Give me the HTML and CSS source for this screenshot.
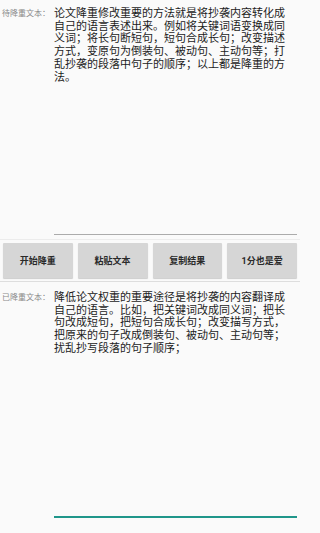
FILE: index.html
```html
<!DOCTYPE html>
<html lang="zh-CN">
<head>
<meta charset="utf-8">
<title>降重</title>
<link rel="stylesheet" href="styles.css">
</head>
<body>
<div class="field field-top">
  <div class="label">待降重文本：</div>
  <div class="box box-input">论文降重修改重要的方法就是将抄袭内容转化成自己的语言表述出来。例如将关键词语变换成同义词；将长句断短句，短句合成长句；改变描述方式，变原句为倒装句、被动句、主动句等；打乱抄袭的段落中句子的顺序；以上都是降重的方法。</div>
</div>
<div class="btnrow">
  <button class="btn">开始降重</button>
  <button class="btn">粘贴文本</button>
  <button class="btn">复制结果</button>
  <button class="btn">1分也是爱</button>
</div>
<div class="field field-bottom">
  <div class="label">已降重文本：</div>
  <div class="box box-output">降低论文权重的重要途径是将抄袭的内容翻译成自己的语言。比如，把关键词改成同义词；把长句改成短句，把短句合成长句；改变描写方式，把原来的句子改成倒装句、被动句、主动句等；扰乱抄写段落的句子顺序；</div>
</div>
</body>
</html>
```

FILE: styles.css
```css
html, body {
  margin: 0;
  padding: 0;
  background: #fafafa;
}
body {
  width: 300px;
  height: 533px;
  overflow: hidden;
  font-family: "Roboto", "Noto Sans CJK SC", sans-serif;
  color: #1c1c1c;
}
.field {
  display: flex;
  align-items: flex-start;
}
.field-top {
  padding: 8px 3px 4px 0;
}
.field-bottom {
  padding: 10px 3px 0 0;
}
.label {
  width: 54px;
  padding-left: 2px;
  box-sizing: border-box;
  font-size: 8px;
  line-height: 12.7px;
  color: #8a8a8a;
  white-space: nowrap;
  flex: none;
}
.box {
  flex: 1;
  font-size: 11px;
  line-height: 12.7px;
  padding-right: 4px;
  box-sizing: border-box;
}
.box-input {
  height: 227px;
  border-bottom: 1px solid #ababab;
}
.box-output {
  height: 226px;
  border-bottom: 2px solid #1f968a;
}
.btnrow {
  display: flex;
  gap: 5px;
  padding: 3px;
  border-top: 1px solid #ececec;
  border-bottom: 1px solid #dedede;
}
.btn {
  flex: 1;
  height: 35px;
  margin: 0;
  padding: 0;
  border: none;
  border-radius: 1px;
  background: #d6d6d6;
  box-shadow: 0 1px 1px rgba(0, 0, 0, 0.18);
  font-family: "Roboto", "Noto Sans CJK SC", sans-serif;
  font-size: 9px;
  font-weight: bold;
  color: #2a2a2a;
}
```
